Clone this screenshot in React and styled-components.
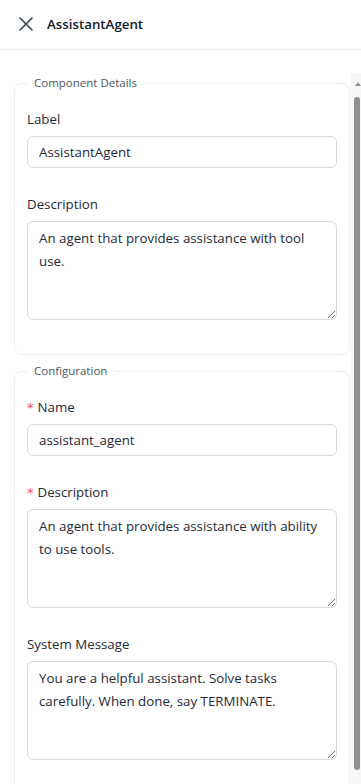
import React from "react";
import styled, { createGlobalStyle } from "styled-components";

const GlobalStyle = createGlobalStyle`
  html, body {
    margin: 0;
    padding: 0;
    overflow: hidden;
    background: #ffffff;
  }
  body {
    font-family: "Open Sans", "Noto Sans", sans-serif;
    color: #1f2937;
  }
  * { box-sizing: border-box; }
`;

const Page = styled.div`
  height: 790px;
  display: flex;
  flex-direction: column;
  background: #fff;
`;

const Header = styled.header`
  height: 50px;
  flex: none;
  display: flex;
  align-items: center;
  gap: 13px;
  padding: 0 0 1px 18px;
  border-bottom: 1px solid #eceef1;
`;

const CloseButton = styled.button`
  width: 16px;
  height: 16px;
  padding: 0;
  border: 0;
  background: none;
  display: flex;
  align-items: center;
  justify-content: center;
  color: #374151;
  cursor: pointer;
`;

const Title = styled.h1`
  margin: 0;
  font-size: 13.3px;
  font-weight: 600;
  color: #111827;
`;

const Body = styled.div`
  flex: 1;
  min-height: 0;
  padding-top: 23px;
  display: flex;
`;

const Scroller = styled.div`
  flex: 1;
  min-width: 0;
  overflow-y: auto;
  scrollbar-width: none;
  padding: 2px 1px 0 14px;
  display: flex;
  flex-direction: column;
  gap: 8px;
`;

const ScrollTrack = styled.div`
  width: 10px;
  flex: none;
  background: #f7f7f7;
  display: flex;
  flex-direction: column;
  align-items: flex-end;
  padding: 9px 1px 20px 3px;
`;

const ScrollArrow = styled.div`
  width: 0;
  height: 0;
  align-self: center;
  margin-left: 2px;
  border-left: 3px solid transparent;
  border-right: 3px solid transparent;
  border-bottom: 4px solid #8f8f8f;
`;

const ScrollThumb = styled.div`
  width: 6px;
  flex: 1;
  margin-top: 11px;
  background: #8f8f8f;
  border-radius: 3px;
`;

const Section = styled.fieldset`
  flex: none;
  margin: 0;
  border: 1px solid #eceff3;
  border-radius: 8px;
  padding: 8px 12px 34px 12px;
  min-width: 0;
`;

const Legend = styled.legend`
  padding: 0 7px;
  font-size: 11.5px;
  line-height: 16px;
  color: #4b5563;
`;

const Field = styled.div`
  display: flex;
  flex-direction: column;
  gap: 6px;
  margin-top: ${(p) => (p.$first ? "9px" : "25px")};
`;

const Label = styled.label`
  font-size: 13.3px;
  line-height: 22px;
  color: #1f2937;
  display: flex;
  align-items: center;
`;

const Required = styled.span`
  color: #ff4d4f;
  font-size: 13px;
  margin-right: 4px;
  font-family: "DejaVu Sans", sans-serif;
  line-height: 1;
`;

const Input = styled.input`
  height: 32px;
  width: 100%;
  border: 1px solid #d9d9d9;
  border-radius: 6px;
  padding: 4px 11px;
  font: inherit;
  font-size: 13.3px;
  line-height: 22px;
  color: #1f2937;
  background: #fff;
  outline: none;
`;

const TextArea = styled.textarea`
  height: 99px;
  width: 100%;
  border: 1px solid #d9d9d9;
  border-radius: 6px;
  padding: 5px 11px;
  font: inherit;
  font-size: 13.3px;
  line-height: 23px;
  color: #1f2937;
  background: #fff;
  outline: none;
  display: block;
`;

const CloseIcon = () => (
  <svg width="14" height="14" viewBox="0 0 14 14" fill="none">
    <path d="M1 1L13 13M13 1L1 13" stroke="currentColor" strokeWidth="1.6" strokeLinecap="round" />
  </svg>
);

export default function App() {
  return (
    <>
      <GlobalStyle />
      <Page>
        <Header>
          <CloseButton aria-label="Close">
            <CloseIcon />
          </CloseButton>
          <Title>AssistantAgent</Title>
        </Header>
        <Body>
          <Scroller>
            <Section>
              <Legend>Component Details</Legend>
              <Field $first>
                <Label>Label</Label>
                <Input defaultValue="AssistantAgent" />
              </Field>
              <Field>
                <Label>Description</Label>
                <TextArea defaultValue="An agent that provides assistance with tool use." />
              </Field>
            </Section>
            <Section>
              <Legend>Configuration</Legend>
              <Field $first>
                <Label>
                  <Required>*</Required>Name
                </Label>
                <Input defaultValue="assistant_agent" />
              </Field>
              <Field>
                <Label>
                  <Required>*</Required>Description
                </Label>
                <TextArea defaultValue="An agent that provides assistance with ability to use tools." />
              </Field>
              <Field>
                <Label>System Message</Label>
                <TextArea defaultValue="You are a helpful assistant. Solve tasks carefully. When done, say TERMINATE." />
              </Field>
            </Section>
          </Scroller>
          <ScrollTrack aria-hidden="true">
            <ScrollArrow />
            <ScrollThumb />
          </ScrollTrack>
        </Body>
      </Page>
    </>
  );
}
